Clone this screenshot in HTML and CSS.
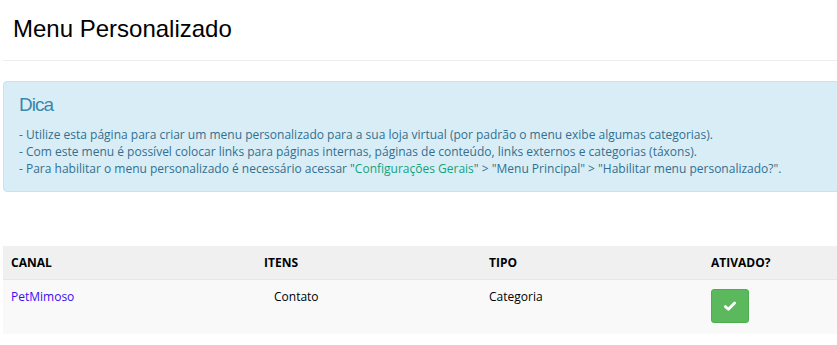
FILE: index.html
```html
<!DOCTYPE html>
<html lang="pt-BR">
<head>
    <meta charset="UTF-8">
    <meta name="viewport" content="width=device-width, initial-scale=1.0">
    <title>Menu Personalizado</title>
    <link rel="stylesheet" href="styles.css">
</head>
<body>
    <div class="page">
        <div class="page-header">
            <h1 class="page-title">Menu Personalizado</h1>
        </div>

        <div class="alert-info">
            <h4 class="alert-title">Dica</h4>
            <p>
                - Utilize esta página para criar um menu personalizado para a sua loja virtual (por padrão o menu exibe algumas categorias).<br>
                - Com este menu é possível colocar links para páginas internas, páginas de conteúdo, links externos e categorias (táxons).<br>
                - Para habilitar o menu personalizado é necessário acessar "<a href="#" class="alert-link">Configurações Gerais</a>" &gt; "Menu Principal" &gt; "Habilitar menu personalizado?".
            </p>
        </div>

        <table class="menu-table">
            <thead>
                <tr>
                    <th class="col-canal">Canal</th>
                    <th class="col-itens">Itens</th>
                    <th class="col-tipo">Tipo</th>
                    <th>Ativado?</th>
                </tr>
            </thead>
            <tbody>
                <tr>
                    <td><a href="#" class="canal-link">PetMimoso</a></td>
                    <td><span class="item-name">Contato</span></td>
                    <td>Categoria</td>
                    <td>
                        <button class="btn-active" type="button">
                            <svg width="12" height="10" viewBox="0 0 12 10">
                                <path d="M1.4 5.6 L4.4 8.2 L10.6 2" fill="none" stroke="#fff" stroke-width="2.8" stroke-linecap="round" stroke-linejoin="round"/>
                            </svg>
                        </button>
                    </td>
                </tr>
            </tbody>
        </table>
    </div>
</body>
</html>
```

FILE: styles.css
```css
* {
    margin: 0;
    padding: 0;
    box-sizing: border-box;
}

html, body {
    overflow: hidden;
}

body {
    font-family: 'Open Sans', 'Liberation Sans', Arial, sans-serif;
    font-size: 12px;
    color: #000;
    background: #fff;
}

.page {
    width: 880px;
    padding-left: 3px;
}

.page-header {
    padding-top: 15px;
    border-bottom: 1px solid #eeeeee;
}

.page-title {
    font-family: 'Liberation Sans', Arial, sans-serif;
    font-size: 24px;
    line-height: 27px;
    font-weight: normal;
    color: #000;
    padding-left: 10px;
    padding-bottom: 18px;
}

.alert-info {
    margin-top: 20px;
    background: #d9edf7;
    border: 1px solid #bce8f1;
    border-radius: 4px;
    padding: 12px 15px 14px;
    color: #31708f;
}

.alert-title {
    font-family: 'Liberation Sans', Arial, sans-serif;
    font-size: 19px;
    letter-spacing: -1px;
    line-height: 22px;
    font-weight: normal;
    color: #3a87ad;
    margin-bottom: 10px;
}

.alert-info p {
    font-size: 12px;
    line-height: 17px;
}

.alert-link {
    color: #13a37a;
    text-decoration: none;
}

.menu-table {
    margin-top: 54px;
    width: 100%;
    border-collapse: collapse;
}

.menu-table th {
    background: #f0f0f0;
    text-align: left;
    text-transform: uppercase;
    font-weight: bold;
    line-height: 17px;
    padding: 8px;
    border-bottom: 1px solid #e6e6e6;
}

.menu-table td {
    background: #f9f9f9;
    vertical-align: top;
    line-height: 17px;
    padding: 8px 8px 11px;
}

.col-canal {
    width: 253px;
}

.col-itens {
    width: 225px;
}

.col-tipo {
    width: 222px;
}

.canal-link {
    color: #3a0cf5;
    text-decoration: none;
}

.item-name {
    padding-left: 10px;
}

.btn-active {
    display: flex;
    align-items: center;
    justify-content: center;
    width: 38px;
    height: 34px;
    margin-top: 1px;
    background: #5cb85c;
    border: 1px solid #4cae4c;
    border-radius: 3px;
    cursor: pointer;
}
```
